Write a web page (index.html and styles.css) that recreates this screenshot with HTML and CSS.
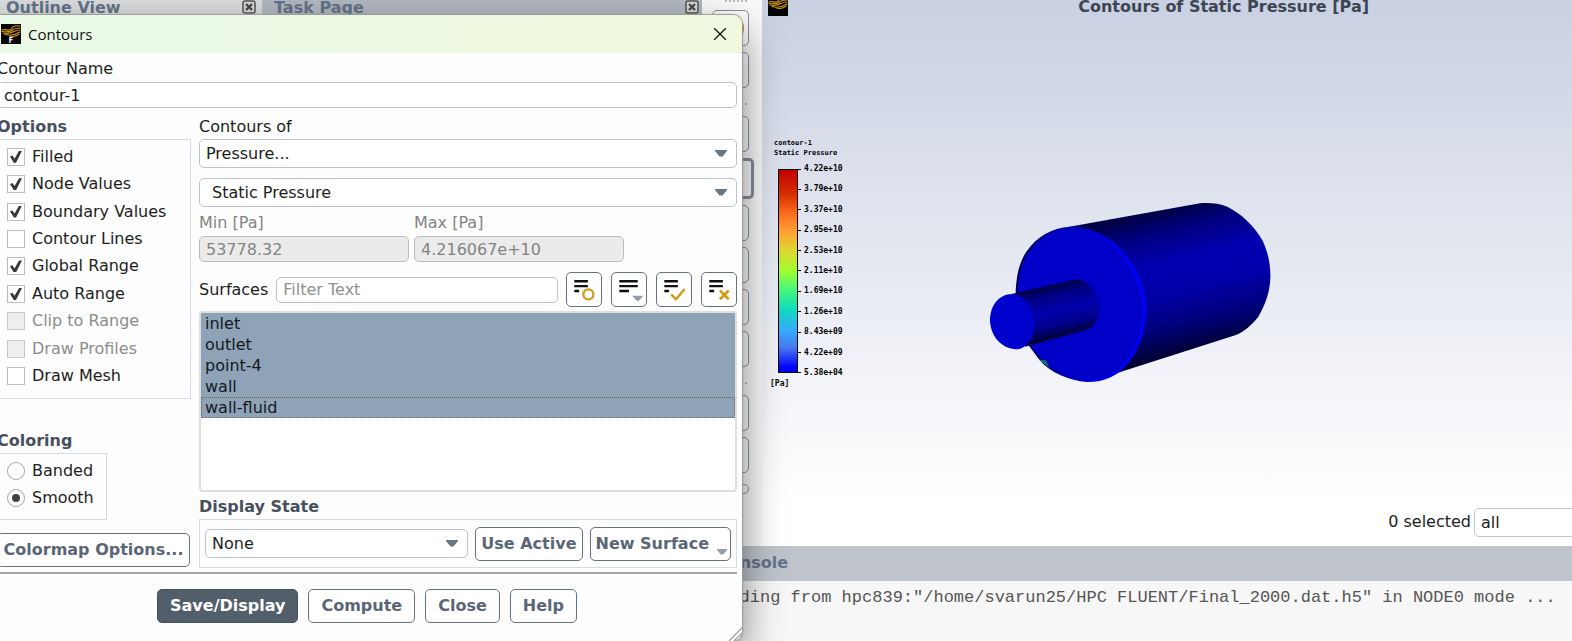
FILE: index.html
```
<!DOCTYPE html>
<html lang="en">
<head>
<meta charset="utf-8">
<title>Contours</title>
<link rel="stylesheet" href="styles.css">
</head>
<body>
<svg class="defs" aria-hidden="true">
  <symbol id="logo" viewBox="0 0 20 20">
    <rect width="20" height="20" fill="#050403"/>
    <g fill="none" stroke="#d3951a" stroke-width="1.1" stroke-linecap="round">
      <path d="M1 6c3-1.500 6 1.500 9-.5 1-2.500 4-4.500 9-3.500"/>
      <path d="M1 7.500c4 .5 7 1 10-1 2-2 4-2.500 8-2.500"/>
      <path d="M2 9c5 1 8 0 11-1.500 2-1 4-1.500 6-1.500"/>
      <path d="M4 10.500c5 1.500 11 0 15-2.500"/>
      <path d="M9 12.200c4 .8 7 0 9-2"/>
    </g>
  </symbol>
  <symbol id="arrow" viewBox="0 0 12 7"><path d="M0 0h12v1L7.500 6.500h-3L0 1z" fill="#6b7683"/></symbol>
  <symbol id="boxed-x" viewBox="0 0 14 14">
    <rect x="1" y="1" width="12" height="12" rx="2" fill="#d8d8d8" stroke="#555" stroke-width="1.5"/>
    <path d="M4 4l6 6M10 4l-6 6" stroke="#444" stroke-width="2.200"/>
  </symbol>
</svg>

<main class="app">
  <section class="pane outline">
    <h2>Outline View</h2>
    <button class="pane-close" aria-label="Close Outline View"><svg><use href="#boxed-x"/></svg></button>
  </section>
  <section class="pane task">
    <h2>Task Page</h2>
    <button class="pane-close" aria-label="Close Task Page"><svg><use href="#boxed-x"/></svg></button>
  </section>

  <nav class="toolbar" aria-label="View tools">
    <span class="grip"></span>
    <button class="tool" aria-label="Rotate"><svg viewBox="0 0 36 36"><circle cx="17" cy="18" r="14" fill="none" stroke="#c2922a" stroke-width="2"/></svg></button>
    <button class="tool" aria-label="Pan"></button>
    <span class="grip"></span>
    <button class="tool" aria-label="Zoom"></button>
    <button class="tool active" aria-label="Select"></button>
    <button class="tool" aria-label="Fit"></button>
    <button class="tool" aria-label="Probe"></button>
    <button class="tool" aria-label="Orient"></button>
    <button class="tool" aria-label="Views"></button>
    <span class="grip"></span>
    <button class="tool" aria-label="Capture"></button>
    <button class="tool" aria-label="Layout"></button>
    <button class="tool more" aria-label="More"></button>
  </nav>

  <section class="graphics">
    <header class="graphics-head">
      <svg class="logo"><use href="#logo"/></svg>
      <h1>Contours of Static Pressure [Pa]</h1>
    </header>
    <div class="legend">
      <p class="legend-name">contour-1<br>Static Pressure</p>
      <div class="scale">
        <div class="ramp"></div>
        <ol>
          <li>4.22e+10</li><li>3.79e+10</li><li>3.37e+10</li><li>2.95e+10</li><li>2.53e+10</li><li>2.11e+10</li><li>1.69e+10</li><li>1.26e+10</li><li>8.43e+09</li><li>4.22e+09</li><li>5.38e+04</li>
        </ol>
      </div>
      <p class="unit">[Pa]</p>
    </div>
    <svg class="model" viewBox="0 0 960 600" role="img" aria-label="Static pressure on a stepped cylinder">
      <defs>
        <linearGradient id="body" gradientUnits="userSpaceOnUse" x1="560" y1="70" x2="660" y2="490">
          <stop offset="0" stop-color="#000048"/><stop offset=".12" stop-color="#00007c"/><stop offset=".35" stop-color="#0000b0"/><stop offset=".55" stop-color="#0000aa"/><stop offset=".8" stop-color="#000078"/><stop offset="1" stop-color="#000030"/>
        </linearGradient>
        <linearGradient id="shaft" gradientUnits="userSpaceOnUse" x1="235" y1="285" x2="272" y2="445">
          <stop offset="0" stop-color="#000040"/><stop offset=".2" stop-color="#000084"/><stop offset=".5" stop-color="#0000ae"/><stop offset=".75" stop-color="#000088"/><stop offset="1" stop-color="#000030"/>
        </linearGradient>
        <linearGradient id="rim" x1="0" y1="0" x2="1" y2="0">
          <stop offset="0" stop-color="#00003c"/><stop offset=".35" stop-color="#0000a0"/><stop offset=".6" stop-color="#0000e4"/><stop offset="1" stop-color="#0000f4"/>
        </linearGradient>
      </defs>
      <path fill="url(#body)" d="M290 112L690 40C715 38 748 40 772 50C815 72 850 105 878 152C895 190 902 225 901 265C899 310 885 345 865 380C845 405 825 422 800 434L430 553z"/>
      <path fill="url(#rim)" d="M137 308C138 260 148 215 170 184C200 140 245 113 300 110C355 109 400 133 440 164C495 218 531 290 529 365C526 430 505 485 470 525C440 560 400 577 350 576C300 572 240 550 207 508L175 465z"/>
      <path fill="#0000c8" d="M142 308C143 264 153 219 175 188C204 145 247 118 300 115C351 114 392 138 430 170C482 222 517 290 517 362C515 430 494 483 460 520C432 555 397 570 350 570C302 566 246 543 212 504L180 465z"/>
      <path fill="url(#shaft)" d="M125 312L320 268C355 272 386 310 388 350C389 385 372 412 345 421L165 470z"/>
      <path fill="#0000ce" d="M127 312C163 316 191 352 193 398C193 440 172 478 136 478C90 474 60 435 60 388C61 345 88 312 127 312z"/>
      <path fill="#087c68" d="M207 509l20 2 12 22z"/>
    </svg>
    <div class="selection">
      <label for="sel">0 selected</label>
      <select id="sel"><option>all</option></select>
    </div>
  </section>

  <section class="console">
    <h2>Console</h2>
    <pre>Reading from hpc839:"/home/svarun25/HPC FLUENT/Final_2000.dat.h5" in NODE0 mode ...</pre>
  </section>
</main>

<form class="dialog" role="dialog" aria-labelledby="dlg-title">
  <header class="titlebar">
    <svg class="logo"><use href="#logo"/></svg><span class="badge">F</span>
    <h2 id="dlg-title">Contours</h2>
    <button type="button" class="close" aria-label="Close window"><svg viewBox="0 0 12 12"><path d="M0 0l12 12M12 0L0 12" stroke="#111" stroke-width="1.300"/></svg></button>
  </header>

  <div class="name">
    <label for="cname">Contour Name</label>
    <input id="cname" type="text" value="contour-1">
  </div>

  <div class="columns">
    <div class="left">
      <fieldset class="options">
        <legend>Options</legend>
        <div class="frame checks">
          <label><input type="checkbox" checked>Filled</label>
          <label><input type="checkbox" checked>Node Values</label>
          <label><input type="checkbox" checked>Boundary Values</label>
          <label><input type="checkbox">Contour Lines</label>
          <label><input type="checkbox" checked>Global Range</label>
          <label><input type="checkbox" checked>Auto Range</label>
          <label class="off"><input type="checkbox" disabled>Clip to Range</label>
          <label class="off"><input type="checkbox" disabled>Draw Profiles</label>
          <label><input type="checkbox">Draw Mesh</label>
        </div>
      </fieldset>
      <fieldset class="coloring">
        <legend>Coloring</legend>
        <div class="frame radios">
          <label><input type="radio" name="coloring">Banded</label>
          <label><input type="radio" name="coloring" checked>Smooth</label>
        </div>
      </fieldset>
      <button type="button" class="btn colormap">Colormap Options...</button>
    </div>

    <div class="right">
      <label class="of" for="field">Contours of</label>
      <div class="selects">
        <div class="combo"><select id="field"><option>Pressure...</option></select><svg><use href="#arrow"/></svg></div>
        <div class="combo sub"><select aria-label="Variable"><option>Static Pressure</option></select><svg><use href="#arrow"/></svg></div>
      </div>
      <div class="range">
        <div><label for="min">Min [Pa]</label><input id="min" type="text" value="53778.32" disabled></div>
        <div><label for="max">Max [Pa]</label><input id="max" type="text" value="4.216067e+10" disabled></div>
      </div>
      <div class="surfaces">
        <label for="filter">Surfaces</label>
        <input id="filter" type="text" placeholder="Filter Text">
        <div class="icons">
          <button type="button" aria-label="Toggle shown"><svg viewBox="0 0 34 34"><path d="M7 8.500h14M7 13.500h14M7 18.500h5" stroke="#111" stroke-width="2.500"/><circle cx="21.500" cy="22" r="5.200" fill="none" stroke="#d09a1c" stroke-width="2.400"/></svg></button>
          <button type="button" aria-label="List options"><svg viewBox="0 0 34 34"><path d="M7 8.500h19M7 13.500h19M7 18.500h10" stroke="#111" stroke-width="2.500"/><path d="M21 23.500h10v1l-4 4h-2l-4-4z" fill="#939cab"/></svg></button>
          <button type="button" aria-label="Select all"><svg viewBox="0 0 34 34"><path d="M7 8.500h14M7 13.500h14M7 18.500h5" stroke="#111" stroke-width="2.500"/><path d="M14 22l5 5 9-10.500" fill="none" stroke="#d09a1c" stroke-width="2.600"/></svg></button>
          <button type="button" aria-label="Deselect all"><svg viewBox="0 0 34 34"><path d="M7 8.500h14M7 13.500h14M7 18.500h5" stroke="#111" stroke-width="2.500"/><path d="M18 18l9 9M27 18l-9 9" stroke="#d09a1c" stroke-width="2.800"/></svg></button>
        </div>
      </div>
      <select class="list" multiple aria-label="Surfaces list">
        <option selected>inlet</option>
        <option selected>outlet</option>
        <option selected>point-4</option>
        <option selected>wall</option>
        <option selected class="current">wall-fluid</option>
      </select>
      <fieldset class="state">
        <legend>Display State</legend>
        <div class="frame state-row">
          <div class="combo"><select aria-label="Display State"><option>None</option></select><svg><use href="#arrow"/></svg></div>
          <button type="button" class="btn">Use Active</button>
          <button type="button" class="btn menu">New Surface<svg><use href="#arrow"/></svg></button>
        </div>
      </fieldset>
    </div>
  </div>

  <footer class="actions">
    <button type="button" class="btn primary">Save/Display</button>
    <button type="button" class="btn">Compute</button>
    <button type="button" class="btn">Close</button>
    <button type="button" class="btn">Help</button>
  </footer>
  <svg class="resize" viewBox="0 0 14 14"><path d="M1 14L14 1M6 14l8-8" stroke="#999" stroke-width="1.200"/></svg>
</form>
</body>
</html>
```

FILE: styles.css
```
* { box-sizing: border-box; }
body {
  margin: 0;
  height: 100vh;
  overflow: hidden;
  background: #f0f0f0;
  color: #1c1e20;
  font: 16px/24px "DejaVu Sans", sans-serif;
}
h1, h2, p, pre, ol, fieldset, legend { margin: 0; padding: 0; border: 0; }
h1, h2 { font-size: 16px; font-weight: bold; }
ol { list-style: none; }
button, input, select { font: inherit; color: inherit; margin: 0; }
svg { display: block; }
.defs { position: absolute; width: 0; height: 0; }

/* Application window */
.app {
  display: grid;
  grid-template-columns: 262px 440px 60px 1fr;
  grid-template-rows: 1fr 95px;
  height: 100vh;
}
.pane {
  display: flex;
  align-items: flex-start;
  justify-content: space-between;
  height: 15px;
  padding: 0 6px;
}
.pane h2 { line-height: 16px; color: #64748a; }
.outline { background: #dcddde; }
.task { background: #b4b9c1; padding: 0 3px 0 12px; }
.pane-close { padding: 0; border: 0; background: none; }
.pane-close svg { width: 14px; height: 14px; }

.toolbar {
  display: flex;
  flex-direction: column;
  gap: 6px;
  padding-left: 10px;
  background: #fafafa;
  overflow: hidden;
}
.grip { width: 22px; height: 3px; margin: 0 0 1px 13px; border-top: 2px dotted #bbb; }
.grip:not(:first-child) { margin: 9px 0 4px 13px; }
.tool {
  flex: none;
  width: 37px;
  height: 36px;
  padding: 0;
  border: 1px solid #82909d;
  border-radius: 5px;
  background: #fdfdfd;
}
.tool.active { width: 42px; height: 41px; border-width: 3px; }
.tool.more { height: 10px; margin-top: 5px; }

/* Graphics window */
.graphics {
  position: relative;
  display: flex;
  flex-direction: column;
  background: linear-gradient(#cad1e2 0, #cbd2e3 20px, #fff 500px);
}
.graphics-head { display: flex; height: 16px; padding-left: 6px; }
.graphics-head h1 { flex: 1; padding-right: 203px; text-align: right; line-height: 14px; color: #3d4552; }
.logo { width: 20px; height: 20px; flex: none; }
.graphics-head .logo { margin-top: -4px; }
.legend {
  width: 110px;
  margin-top: 122px;
  padding-left: 12px;
  color: #000;
  font: bold 8px/10px "DejaVu Sans Mono", monospace;
}
.legend-name { font-size: 7px; white-space: nowrap; }
.scale { display: flex; margin-top: 6px; }
.ramp {
  width: 20px;
  height: 204px;
  margin: 5px 0 5px 4px;
  border: 1px solid #000;
  background: linear-gradient(#c40000, #d83000 12%, #ff7020 22%, #ffa033 30%, #e0d830 40%, #a0ff30 50%, #40f880 60%, #10dcc0 69%, #38a8ff 80%, #4878f0 88%, #0000ff 98%);
}
.scale ol { display: flex; flex-direction: column; justify-content: space-between; }
.scale li { display: flex; align-items: center; gap: 3px; }
.scale li::before { content: ""; width: 3px; height: 1px; background: #000; }
.unit { margin: 1px 0 0 -4px; }
.model { position: absolute; left: 208px; top: 190px; width: 320px; height: 200px; }
.selection { display: flex; justify-content: flex-end; gap: 3px; margin-top: auto; padding-bottom: 9px; line-height: 28px; }
.selection select {
  width: 110px;
  height: 29px;
  margin-right: -12px;
  padding: 0 6px;
  border: 1px solid #bcc6d8;
  border-radius: 5px;
  background: #fff;
  appearance: none;
}

.console { grid-column: 3 / -1; background: #f7f7f7; overflow: hidden; }
.console h2 { height: 35px; padding-left: 15px; line-height: 34px; color: #64748a; background: #bfc4cc; }
.console pre { padding: 5px 0 0 7px; font: 17px/24px "Liberation Mono", monospace; color: #555; }

/* Contours dialog */
.dialog {
  position: absolute;
  left: -10px;
  top: 15px;
  width: 752px;
  background: #fdfdfd;
  border-radius: 0 9px 9px 0;
  box-shadow: 0 0 1px 1px #999, 0 16px 40px rgba(0, 0, 0, .5);
}
.titlebar {
  display: flex;
  align-items: center;
  height: 38px;
  padding: 0 15px 0 11px;
  border-radius: 0 9px 0 0;
  background: linear-gradient(90deg, #eaf8e6 30%, #eff8dc 80%);
}
.titlebar h2 { margin-left: 7px; padding-bottom: 1px; font: 15px/22px "Open Sans", sans-serif; color: #111; flex: 1; }
.badge { width: 0; align-self: flex-end; color: #fff; font: bold 8px/8px "Open Sans", sans-serif; direction: rtl; padding: 0 0 9px; text-indent: 8px; }
.close { padding: 1px; border: 0; background: none; }
.close svg { width: 12px; height: 12px; }

.dialog input[type=text], .combo select {
  width: 100%;
  height: 26px;
  padding: 0 6px;
  border: 1px solid #b9c3d3;
  border-radius: 5px;
  background: #fff;
}
.dialog input[type=text]:disabled { background: #ebebeb; border-color: #bdbdbd; color: #848484; }
.dialog input::placeholder { color: #909090; opacity: 1; }
.name { display: flex; flex-direction: column; padding: 4px 5px 0 7px; }
.name label { height: 25px; }

.columns { display: grid; grid-template-columns: 194px 1fr; gap: 8px; padding: 7px 5px 4px 7px; }
.left, .right { display: flex; flex-direction: column; min-width: 0; }
legend { display: block; font-weight: bold; color: #47505e; }
.frame { border: 1px solid #d5dae6; }
.checks { display: grid; grid-auto-rows: 1fr; height: 260px; padding: 3px 0 8px 9px; }
.frame label { display: flex; align-items: center; gap: 7px; }
.off { color: #8c8c8c; }
.checks input, .radios input {
  display: grid;
  place-content: center;
  width: 18px;
  height: 18px;
  border: 1px solid #bdbdbd;
  background: #fff;
  appearance: none;
}
.checks input:checked::before {
  content: "";
  width: 12px;
  height: 12px;
  background: #34373c;
  clip-path: polygon(0 48%, 20% 40%, 38% 66%, 76% 0, 100% 0, 50% 100%, 32% 100%);
}
.checks input:disabled { background: #eee; border-color: #c8c8c8; }
.coloring { margin-top: 30px; }
.radios { width: 110px; height: 67px; padding: 3px 0 8px 9px; display: grid; }
.radios input { border-radius: 50%; border-color: #a8a8a8; }
.radios input:checked::before { content: ""; width: 8px; height: 8px; border-radius: 50%; background: #444; }

.btn {
  height: 34px;
  padding: 0 12px;
  border: 1px solid #66717f;
  border-radius: 5px;
  background: #fff;
  color: #5a6676;
  font-weight: bold;
  white-space: nowrap;
}
.colormap { margin: auto 1px 1px 0; padding: 0 4px; }

.of { height: 24px; }
.selects { display: flex; flex-direction: column; gap: 10px; }
.combo { position: relative; display: flex; }
.combo select { height: 29px; appearance: none; }
.combo svg { position: absolute; right: 10px; top: 11px; width: 12px; height: 7px; pointer-events: none; }
.sub select { padding-left: 12px; }
.range { display: grid; grid-template-columns: 210px 210px; gap: 5px; margin-top: 4px; color: #848484; }
.range label { display: block; height: 25px; }
.surfaces { display: flex; align-items: center; gap: 8px; margin-top: 10px; }
.surfaces input[type=text] { flex: 1; min-width: 0; }
.icons { display: flex; gap: 9px; }
.icons button { width: 36px; height: 35px; padding: 0; border: 1px solid #66717f; border-radius: 5px; background: #fff; }
.icons svg { width: 34px; height: 33px; }
.list {
  width: 100%;
  height: 181px;
  margin-top: 4px;
  padding: 0;
  border: 2px solid #dedede;
  border-radius: 4px;
  background: #fff;
  outline: 0;
  overflow: hidden;
}
.list option { min-height: 0; padding: 1px 4px; }
.list option:checked { background: #8ea3b8 linear-gradient(#8ea3b8, #8ea3b8); color: #15191d; }
.list .current { border: 1px dotted #6a6050; padding: 0 3px; }
.state { margin-top: 3px; }
.state-row { display: flex; align-items: center; gap: 7px; padding: 7px 5px; height: 49px; }
.state-row .combo { flex: 1; }
.state-row .btn { padding: 0 5px; }
.state-row .menu { position: relative; padding-right: 21px; }
.menu svg { position: absolute; right: 3px; bottom: 5px; width: 10px; height: 6px; opacity: .7; }
.actions {
  display: flex;
  justify-content: center;
  gap: 10px;
  margin: 0 5px 0 0;
  padding: 15px 0 18px 7px;
  border-top: 2px solid #a6a6a8;
}
.btn.primary { background: #535e6b; border-color: #46515f; color: #fff; }
.resize { position: absolute; right: 0; bottom: 0; width: 14px; height: 14px; }
```
